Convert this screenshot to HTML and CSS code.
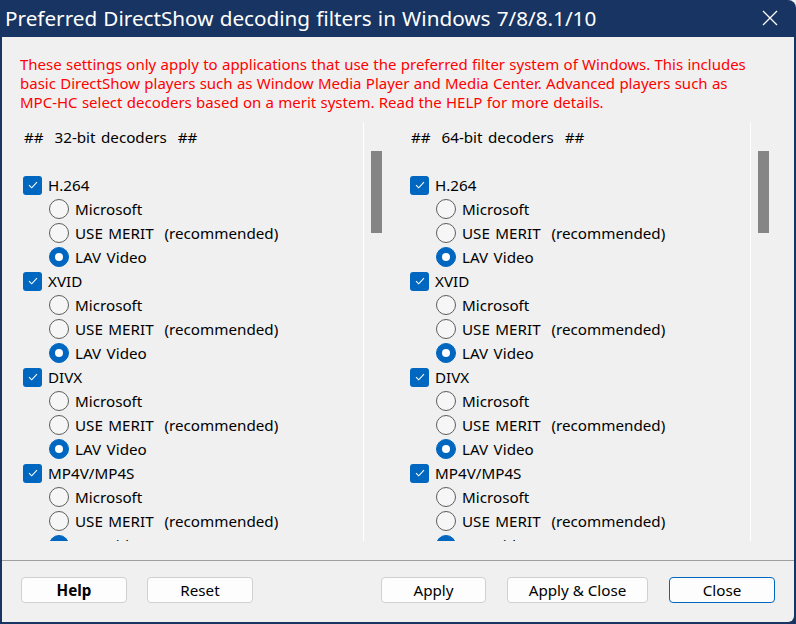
FILE: index.html
```html
<!DOCTYPE html>
<html>
<head>
<meta charset="utf-8">
<link rel="stylesheet" href="styles.css">
</head>
<body>
<div class="window">
  <div class="titlebar">
    <span class="title">Preferred DirectShow decoding filters in Windows 7/8/8.1/10</span>
    <svg class="close-x" width="16" height="16" viewBox="0 0 16 16"><path d="M1 1L15 15M15 1L1 15" stroke="#fff" stroke-width="1.3" fill="none"/></svg>
  </div>
  <div class="client">
    <p class="notice">These settings only apply to applications that use the preferred filter system of Windows. This includes<br>basic DirectShow players such as Window Media Player and Media Center. Advanced players such as<br>MPC-HC select decoders based on a merit system. Read the HELP for more details.</p>
    <div class="columns">
      <div class="pane">
        <div class="pane-content">
          <div class="row head">##&nbsp;&nbsp;32-bit decoders&nbsp;&nbsp;##</div>
          <div class="row"></div>
          <div class="row chk"><span class="box"><svg width="10" height="8" viewBox="0 0 10 8"><path d="M1 4.2L3.7 6.8L9 1.2" stroke="#fff" stroke-width="1.1" fill="none"/></svg></span>H.264</div>
          <div class="row rad"><span class="dot"></span>Microsoft</div>
          <div class="row rad"><span class="dot"></span>USE MERIT&nbsp;&nbsp;(recommended)</div>
          <div class="row rad"><span class="dot on"></span>LAV Video</div>
          <div class="row chk"><span class="box"><svg width="10" height="8" viewBox="0 0 10 8"><path d="M1 4.2L3.7 6.8L9 1.2" stroke="#fff" stroke-width="1.1" fill="none"/></svg></span>XVID</div>
          <div class="row rad"><span class="dot"></span>Microsoft</div>
          <div class="row rad"><span class="dot"></span>USE MERIT&nbsp;&nbsp;(recommended)</div>
          <div class="row rad"><span class="dot on"></span>LAV Video</div>
          <div class="row chk"><span class="box"><svg width="10" height="8" viewBox="0 0 10 8"><path d="M1 4.2L3.7 6.8L9 1.2" stroke="#fff" stroke-width="1.1" fill="none"/></svg></span>DIVX</div>
          <div class="row rad"><span class="dot"></span>Microsoft</div>
          <div class="row rad"><span class="dot"></span>USE MERIT&nbsp;&nbsp;(recommended)</div>
          <div class="row rad"><span class="dot on"></span>LAV Video</div>
          <div class="row chk"><span class="box"><svg width="10" height="8" viewBox="0 0 10 8"><path d="M1 4.2L3.7 6.8L9 1.2" stroke="#fff" stroke-width="1.1" fill="none"/></svg></span>MP4V/MP4S</div>
          <div class="row rad"><span class="dot"></span>Microsoft</div>
          <div class="row rad"><span class="dot"></span>USE MERIT&nbsp;&nbsp;(recommended)</div>
          <div class="row rad"><span class="dot on"></span>LAV Video</div>
        </div>
        <div class="scrollbar"><div class="thumb"></div></div>
      </div>
      <div class="pane right">
        <div class="pane-content">
          <div class="row head">##&nbsp;&nbsp;64-bit decoders&nbsp;&nbsp;##</div>
          <div class="row"></div>
          <div class="row chk"><span class="box"><svg width="10" height="8" viewBox="0 0 10 8"><path d="M1 4.2L3.7 6.8L9 1.2" stroke="#fff" stroke-width="1.1" fill="none"/></svg></span>H.264</div>
          <div class="row rad"><span class="dot"></span>Microsoft</div>
          <div class="row rad"><span class="dot"></span>USE MERIT&nbsp;&nbsp;(recommended)</div>
          <div class="row rad"><span class="dot on"></span>LAV Video</div>
          <div class="row chk"><span class="box"><svg width="10" height="8" viewBox="0 0 10 8"><path d="M1 4.2L3.7 6.8L9 1.2" stroke="#fff" stroke-width="1.1" fill="none"/></svg></span>XVID</div>
          <div class="row rad"><span class="dot"></span>Microsoft</div>
          <div class="row rad"><span class="dot"></span>USE MERIT&nbsp;&nbsp;(recommended)</div>
          <div class="row rad"><span class="dot on"></span>LAV Video</div>
          <div class="row chk"><span class="box"><svg width="10" height="8" viewBox="0 0 10 8"><path d="M1 4.2L3.7 6.8L9 1.2" stroke="#fff" stroke-width="1.1" fill="none"/></svg></span>DIVX</div>
          <div class="row rad"><span class="dot"></span>Microsoft</div>
          <div class="row rad"><span class="dot"></span>USE MERIT&nbsp;&nbsp;(recommended)</div>
          <div class="row rad"><span class="dot on"></span>LAV Video</div>
          <div class="row chk"><span class="box"><svg width="10" height="8" viewBox="0 0 10 8"><path d="M1 4.2L3.7 6.8L9 1.2" stroke="#fff" stroke-width="1.1" fill="none"/></svg></span>MP4V/MP4S</div>
          <div class="row rad"><span class="dot"></span>Microsoft</div>
          <div class="row rad"><span class="dot"></span>USE MERIT&nbsp;&nbsp;(recommended)</div>
          <div class="row rad"><span class="dot on"></span>LAV Video</div>
        </div>
        <div class="scrollbar"><div class="thumb"></div></div>
      </div>
    </div>
    <div class="footer">
      <button class="btn bold">Help</button>
      <button class="btn reset">Reset</button>
      <div class="spacer"></div>
      <button class="btn apply">Apply</button>
      <button class="btn wide">Apply &amp; Close</button>
      <button class="btn default">Close</button>
    </div>
  </div>
</div>
</body>
</html>
```
FILE: styles.css
```css
html, body {
  margin: 0;
  padding: 0;
  background: #f0f0f0;
}
body {
  width: 796px;
  height: 624px;
  overflow: hidden;
  font-family: "Noto Sans", "Open Sans", sans-serif;
}
.window {
  width: 796px;
  height: 624px;
  background: #183462;
  border-top-right-radius: 8px;
  display: flex;
  flex-direction: column;
  box-sizing: border-box;
}
.titlebar {
  height: 37px;
  flex: none;
  display: flex;
  align-items: center;
  padding-left: 5px;
  padding-right: 18px;
  box-sizing: border-box;
}
.title {
  color: #fff;
  font-size: 20.7px;
  flex: 1;
  white-space: nowrap;
  padding-bottom: 1px;
  word-spacing: 0.8px;
}
.close-x {
  margin-bottom: 2px;
}
.client {
  flex: 1;
  margin: 0 2px 2px 2px;
  background: #f0f0f0;
  border-bottom-right-radius: 6px;
  display: flex;
  flex-direction: column;
  min-height: 0;
}
.notice {
  margin: 0;
  padding: 18px 18px 0 18px;
  color: #ff0000;
  font-size: 15px;
  line-height: 19px;
  white-space: nowrap;
  height: 67px;
  word-spacing: 0.4px;
}
.columns {
  display: flex;
  height: 419px;
  flex: none;
}
.pane {
  display: flex;
  width: 388px;
  height: 419px;
  flex: none;
}
.pane.right {
  width: 387px;
}
.pane-content {
  flex: 1;
  overflow: hidden;
  padding: 3px 0 0 21px;
}
.pane.right .pane-content {
  padding-left: 20px;
}
.scrollbar {
  width: 26px;
  flex: none;
  border-left: 1px solid #ffffff;
}
.thumb {
  margin: 29px 0 0 7px;
  width: 11px;
  height: 82px;
  background: #858585;
}
.row {
  height: 24px;
  line-height: 24px;
  font-size: 15.2px;
  color: #000;
  white-space: nowrap;
  display: flex;
  align-items: center;
  word-spacing: 1.5px;
}
.row.head {
  word-spacing: 1.5px;
  padding-left: 1px;
}
.box {
  width: 19px;
  height: 19px;
  border-radius: 3px;
  background: #0067c0;
  display: flex;
  align-items: center;
  justify-content: center;
  margin-right: 6px;
  flex: none;
}
.rad {
  padding-left: 26px;
}
.dot {
  width: 18px;
  height: 18px;
  border: 1px solid #5d5d5d;
  border-radius: 50%;
  background: #f6f6f6;
  margin-right: 6px;
  flex: none;
  position: relative;
}
.dot.on {
  border-color: #0067c0;
  background: #0067c0;
}
.dot.on::after {
  content: "";
  position: absolute;
  left: 5px;
  top: 5px;
  width: 8px;
  height: 8px;
  border-radius: 50%;
  background: #fff;
}
.footer {
  flex: 1;
  border-top: 1px solid #a0a0a0;
  margin-top: 19px;
  display: flex;
  align-items: flex-start;
  padding: 16px 19px 0 19px;
}
.spacer {
  flex: 1;
}
.btn {
  width: 106px;
  height: 26px;
  background: #fdfdfd;
  border: 1px solid #d0d0d0;
  border-radius: 4px;
  font-family: "Noto Sans", "Open Sans", sans-serif;
  font-size: 15.2px;
  color: #000;
  padding: 0;
  line-height: 22px;
  flex: none;
}
.btn.bold {
  font-weight: bold;
}
.btn.reset {
  margin-left: 20px;
}
.btn.apply {
  width: 105px;
}
.btn.wide {
  width: 141px;
  margin-left: 21px;
}
.btn.default {
  margin-left: 21px;
  border-color: #0067c0;
}
```
